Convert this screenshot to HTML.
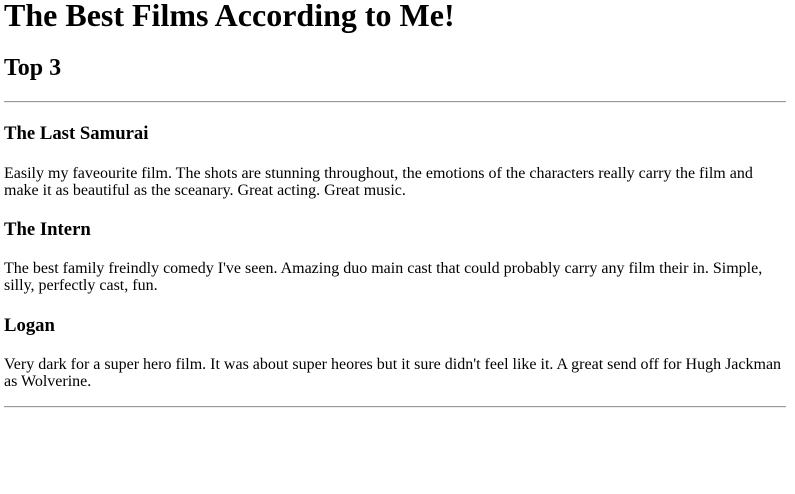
<!DOCTYPE html>
<html><head><meta charset="utf-8"><style>
html,body{background:#fff;}
body{margin:0 9px 0 4px;font-family:"Liberation Serif",serif;color:#000;font-size:16px;}
h1{font-size:32px;margin:-3px 0 21px 0;}
h2{font-size:24px;margin:20px 0 19px 0;}
h3{font-size:18.72px;margin:20.4px 0 19.2px 0;}
p{margin:16px 0;line-height:17px;}
hr{border:0;border-top:1px solid #9a9a9a;border-bottom:1px solid #eee;margin:8px 0;}
</style></head><body>
<h1>The Best Films According to Me!</h1>
<h2>Top 3</h2>
<hr>
<h3>The Last Samurai</h3>
<p>Easily my faveourite film. The shots are stunning throughout, the emotions of the characters really carry the film and make it as beautiful as the sceanary. Great acting. Great music.</p>
<h3>The Intern</h3>
<p>The best family freindly comedy I've seen. Amazing duo main cast that could probably carry any film their in. Simple, silly, perfectly cast, fun.</p>
<h3>Logan</h3>
<p>Very dark for a super hero film. It was about super heores but it sure didn't feel like it. A great send off for Hugh Jackman as Wolverine.</p>
<hr>
</body></html>
